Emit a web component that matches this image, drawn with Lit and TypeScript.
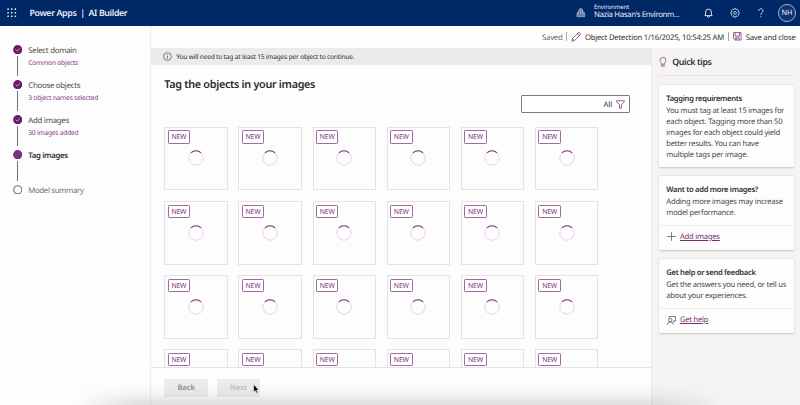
import { LitElement, html, css, svg, nothing } from "lit";
import { customElement } from "lit/decorators.js";
import { classMap } from "lit/directives/class-map.js";

interface Step {
  title: string;
  note?: string;
  state: "done" | "current" | "todo";
}

const STEPS: Step[] = [
  { title: "Select domain", note: "Common objects", state: "done" },
  { title: "Choose objects", note: "3 object names selected", state: "done" },
  { title: "Add images", note: "30 images added", state: "done" },
  { title: "Tag images", state: "current" },
  { title: "Model summary", state: "todo" },
];

const ICONS = {
  waffle: svg`<g fill="currentColor">${[1, 4.5, 8].map((y) =>
    [1, 4.5, 8].map((x) => svg`<rect x=${x - 0.7} y=${y - 0.7} width="1.5" height="1.5" rx=".3"/>`)
  )}</g>`,
};

@customElement("step-list")
class StepList extends LitElement {
  static styles = css`
    :host { display: block; padding: 19px 0 0 12.7px; }
    .step { display: flex; height: 35px; }
    .rail { width: 9.4px; display: flex; flex-direction: column; align-items: center; margin-right: 6.2px; flex: none; }
    .mark { display: block; width: 9.4px; height: 9.4px; flex: none; }
    .line { width: 1px; height: 19.6px; margin-top: 2.2px; background: #747270; }
    .title { font-size: 7.8px; line-height: 10px; margin-top: 1.8px; color: #4b4a49; letter-spacing: -0.25px; white-space: nowrap; }
    .current .title { font-weight: 600; color: #323130; letter-spacing: -0.33px; }
    .todo .title { color: #72706e; letter-spacing: -0.34px; }
    .note { font-size: 6.7px; line-height: 9px; margin-top: 1.6px; color: #8a3b87; letter-spacing: -0.24px; white-space: nowrap; }
  `;
  render() {
    return STEPS.map(
      (s, i) => html`<div class=${classMap({ step: true, [s.state]: true })}>
        <div class="rail">
          <svg class="mark" viewBox="0 0 10 10">
            ${s.state === "todo"
              ? svg`<circle cx="5" cy="5" r="4.3" fill="#fff" stroke="#72706e" stroke-width="1.1"/>`
              : svg`<circle cx="5" cy="5" r="4.9" fill=${s.state === "done" ? "#6b1c69" : "#7c3079"}/>`}
            ${s.state === "done"
              ? svg`<path d="M2.9 5.1 4.4 6.5 7.3 3.7" fill="none" stroke="#d9b9d8" stroke-width=".8"/>`
              : nothing}
          </svg>
          ${i < STEPS.length - 1 ? html`<div class="line"></div>` : nothing}
        </div>
        <div>
          <div class="title">${s.title}</div>
          ${s.note ? html`<div class="note">${s.note}</div>` : nothing}
        </div>
      </div>`
    );
  }
}

@customElement("image-tile")
class ImageTile extends LitElement {
  static styles = css`
    :host { display: block; position: relative; box-sizing: border-box; width: 63.4px; height: 63.4px; border: 1px solid #e4e2e3; background: #fdfdfd; }
    .tag { position: absolute; left: 2.4px; top: 2.4px; box-sizing: border-box; width: 22.4px; height: 13.4px; border: 1px solid #a069a0; border-radius: 1.2px; color: #7d387b; font-size: 6.9px; line-height: 13px; text-align: center; letter-spacing: -0.2px; background: #fff; }
    .spin { position: absolute; left: 22.6px; top: 22.4px; width: 16px; height: 16px; }
  `;
  render() {
    return html`<div class="tag">NEW</div>
      <svg class="spin" viewBox="0 0 16 16" fill="none">
        <circle cx="8" cy="8" r="7.2" stroke="#e9cfe6" stroke-width=".95"/>
        <path d="M2.9 2.9A7.2 7.2 0 0 1 13.1 2.9" stroke="#7c3a79" stroke-width="1.05"/>
      </svg>`;
  }
}

@customElement("app-root")
class AppRoot extends LitElement {
  static styles = css`
    :host { display: flex; flex-direction: column; position: relative; width: 800px; height: 405px; overflow: hidden; background: #fdfdfd; color: #323130; font-family: "Noto Sans", "Open Sans", sans-serif; font-size: 7.6px; text-rendering: geometricPrecision; }
    * { box-sizing: border-box; }
    svg { display: block; flex: none; }
    .bar { height: 25.5px; flex: none; background: #002766; color: #e9edf5; display: flex; align-items: center; padding: 0 4px 0 7.3px; }
    .brand { display: flex; font-size: 8.8px; font-weight: 600; margin-left: 12.8px; letter-spacing: -0.36px; white-space: pre; }
    .grow { flex: 1; }
    .env { width: 109.5px; margin-left: 8.5px; line-height: 9px; white-space: nowrap; }
    .env .small { font-size: 6px; line-height: 8px; margin-top: -2px; letter-spacing: -0.1px; }
    .env .name { font-size: 7.8px; letter-spacing: -0.35px; }
    .bell { margin-right: 17px; }
    .gear { margin-right: 18.5px; }
    .help { margin-right: 14px; }
    .avatar { width: 18px; height: 18px; border-radius: 50%; border: 1px solid #a5b4cf; background: #0e3370; font-size: 7.4px; line-height: 16px; text-align: center; }
    .body { flex: 1; display: flex; min-height: 0; }
    .nav { width: 151.3px; flex: none; border-right: 1px solid #edebec; }
    .right { flex: 1; display: flex; flex-direction: column; min-width: 0; }
    .cmd { height: 22px; flex: none; display: flex; align-items: center; justify-content: flex-end; padding-right: 4.4px; font-size: 7.7px; letter-spacing: -0.21px; white-space: nowrap; }
    .cmd span { padding-top: 2px; }
    .saved { color: #666; }
    .sep { width: 1px; height: 9px; background: #a9a7a5; margin: 0 4.2px 0 3.8px; }
    .object { margin-left: 3.4px; }
    .save { margin-left: 4px; }
    .split { flex: 1; display: flex; min-height: 0; }
    .main { width: 500px; flex: none; display: flex; flex-direction: column; }
    .info { height: 17.7px; flex: none; background: #edebe9; display: flex; align-items: center; padding-left: 11.4px; gap: 4.6px; font-size: 6.6px; letter-spacing: -0.19px; white-space: nowrap; color: #2b2a29; }
    .content { flex: 1; min-height: 0; overflow: hidden; padding: 0 0 0 13px; }
    .heading { margin: 12.1px 0 0; font-size: 10.8px; line-height: 15px; font-weight: 600; letter-spacing: -0.31px; color: #2b2a29; white-space: nowrap; }
    .filter { width: 109px; height: 17.6px; margin: 3.1px 0 0 356.7px; border: 1px solid #7e7c7b; border-radius: 1px; display: flex; align-items: center; justify-content: flex-end; padding-right: 3.5px; gap: 4.2px; font-size: 7.6px; background: #fff; }
    .filter span { padding-top: 1.2px; }
    .tiles { margin-top: 14px; display: grid; grid-template-columns: repeat(6, 63.4px); gap: 10.75px; }
    .foot { height: 38px; flex: none; border-top: 1px solid #e6e5e5; padding: 11.3px 0 0 13px; display: flex; gap: 8.6px; }
    .btn { width: 43.7px; height: 17.4px; background: #ededec; text-align: center; font-size: 7.6px; line-height: 18.4px; font-weight: 600; letter-spacing: -0.1px; color: #8f8e8d; }
    .next { color: #c3c2c1; }
    .tips { flex: 1; background: #f5f4f3; border-left: 1px solid #eceaea; padding: 6.5px 6.4px 0 7px; }
    .tips-title { display: flex; align-items: center; gap: 5px; height: 15px; font-size: 8.8px; font-weight: 600; letter-spacing: -0.36px; }
    .tips-title span { padding-top: .6px; }
    .rule { border-top: 1px solid #e8e6e5; margin: 6px 0 8.7px; }
    .card { background: #fdfdfd; border-radius: 1.6px; box-shadow: 0 .8px 2px rgba(0,0,0,.2); margin-bottom: 8.8px; padding: 8px 0 0 7px; white-space: nowrap; line-height: 10.95px; letter-spacing: -0.22px; color: #484644; }
    .card b { display: block; font-weight: 600; line-height: 12px; margin-bottom: 1.2px; color: #323130; letter-spacing: -0.3px; }
    .first { height: 82.4px; }
    .other { height: 74.4px; }
    .action { display: flex; align-items: center; height: 23px; margin: 5.9px 0 0 -7px; padding-left: 7.4px; gap: 4.2px; border-top: 1px solid #efedec; }
    .link { color: #74306f; text-decoration: underline; padding-top: 1.2px; }
    .shade { position: absolute; left: 75px; bottom: 0; width: 650px; height: 22px; background: linear-gradient(rgba(110,115,115,0), rgba(110,115,115,.06) 45%, rgba(110,115,115,.22)); mask-image: linear-gradient(90deg, transparent, #000 9%, #000 88%, transparent); pointer-events: none; }
    .cursor { position: absolute; left: 253px; top: 383.5px; }
  `;

  render() {
    return html`
      <div class="bar">
        <svg width="9.4" height="9.4" viewBox="0 0 9 9">${ICONS.waffle}</svg>
        <div class="brand"><span>Power Apps  |  AI Builder</span></div>
        <div class="grow"></div>
        <svg width="9.6" height="9.6" viewBox="0 0 10 10" fill="none" stroke="#dbe3f0" stroke-width=".7">
          <path d="M3 7.4V2.9Q3 .7 5 .6 7 .7 7 2.9v4.5M5 .6v6.8M3 3h4M3 5h4M3 3.6 1.3 4.8v2.6M7 3.6l1.7 1.2v2.6M1.3 6H3M7 6h1.7M.3 7.5h9.4M.6 9h8.8"/>
        </svg>
        <div class="env"><div class="small">Environment</div><div class="name">Nazia Hasan's Environm...</div></div>
        <svg class="bell" width="9" height="10" viewBox="0 0 9 10" fill="none" stroke="#e6ebf4" stroke-width=".9">
          <path d="M1.6 7.5V4a2.9 2.9 0 0 1 5.8 0v3.5M.5 7.6h8M3.3 8a1.2 1.2 0 0 0 2.4 0"/>
        </svg>
        <svg class="gear" width="10" height="10" viewBox="0 0 10 10" fill="none" stroke="#d5deed" stroke-width=".8">
          <path d="M4.2.6h1.6l.3 1.2 1.2-.7 1.2 1.2-.7 1.2 1.4.4v1.8l-1.4.4.7 1.2-1.2 1.2-1.2-.7-.3 1.4H4.2l-.3-1.4-1.2.7-1.2-1.2.7-1.2L.8 5.7V3.9l1.4-.4-.7-1.2 1.2-1.2 1.2.7z"/>
          <circle cx="5" cy="4.9" r="1.4"/>
        </svg>
        <svg class="help" width="6" height="10" viewBox="0 0 6 10" fill="none" stroke="#dbe3f0" stroke-width=".9">
          <path d="M.8 2.9a2.1 2.1 0 1 1 3.6 1.4C3.5 5.1 2.9 5.5 2.9 6.9M2.9 8.2v1.1"/>
        </svg>
        <div class="avatar">NH</div>
      </div>
      <div class="body">
        <step-list class="nav"></step-list>
        <div class="right">
          <div class="cmd">
            <span class="saved">Saved</span><span class="sep"></span>
            <svg width="10" height="10" viewBox="0 0 10 10" fill="none" stroke="#80417d" stroke-width=".8">
              <path d="M.8 9.2 1.5 6.5 7 1a1.3 1.3 0 0 1 2 2L3.5 8.5zM6.2 1.8l2 2M1.5 6.5l2 2"/>
            </svg>
            <span class="object">Object Detection 1/16/2025, 10:54:25 AM</span><span class="sep"></span>
            <svg width="8.6" height="8.6" viewBox="0 0 9 9" fill="none" stroke="#80417d" stroke-width=".85">
              <path d="M.6.6h7.8v7.8H1.8L.6 7.2zM2.2.8v3.4h4.6V.8M2.6 8.3V6h3.8v2.3M4 6.4v1.8"/>
            </svg>
            <span class="save">Save and close</span>
          </div>
          <div class="split">
            <div class="main">
              <div class="info">
                <svg width="9" height="9" viewBox="0 0 9 9" fill="none" stroke="#605e5c" stroke-width=".8">
                  <circle cx="4.5" cy="4.5" r="3.9"/><path d="M4.5 3.8v2.9M4.5 2.2v.9"/>
                </svg>
                <span class="info-text">You will need to tag at least 15 images per object to continue.</span>
              </div>
              <div class="content">
                <h1 class="heading">Tag the objects in your images</h1>
                <div class="filter">
                  <span>All</span>
                  <svg width="9" height="9" viewBox="0 0 9 9" fill="none" stroke="#80417d" stroke-width=".85">
                    <path d="M.6 .8h7.8v.8L5.4 4.8v3.4H3.6V4.8L.6 1.6z"/>
                  </svg>
                </div>
                <div class="tiles">${Array.from({ length: 24 }, () => html`<image-tile></image-tile>`)}</div>
              </div>
              <div class="foot"><div class="btn">Back</div><div class="btn next">Next</div></div>
            </div>
            <div class="tips">
              <div class="tips-title">
                <svg width="8" height="10" viewBox="0 0 8 10" fill="none" stroke="#8a4a89" stroke-width=".8">
                  <path d="M2.6 7.2C2.6 5.6.9 5.2.9 3.4a3 3 0 0 1 6 0c0 1.8-1.7 2.2-1.7 3.8zM2.6 7.2v2h2.6v-2"/>
                </svg>
                <span>Quick tips</span>
              </div>
              <div class="rule"></div>
              <div class="card first">
                <b>Tagging requirements</b>
                You must tag at least 15 images for<br>each object. Tagging more than 50<br>images for each object could yield<br>better results. You can have<br>multiple tags per image.
              </div>
              <div class="card other">
                <b>Want to add more images?</b>
                Adding more images may increase<br>model performance.
                <div class="action">
                  <svg width="9" height="9" viewBox="0 0 9 9" stroke="#605e5c" stroke-width=".8"><path d="M4.5 .2v8.6M.2 4.5h8.6"/></svg>
                  <span class="link">Add images</span>
                </div>
              </div>
              <div class="card other">
                <b>Get help or send feedback</b>
                Get the answers you need, or tell us<br>about your experiences.
                <div class="action">
                  <svg width="9" height="9" viewBox="0 0 9 9" fill="none" stroke="#4b4a49" stroke-width=".75">
                    <path d="M2.2 1.8V.6h6.4v4.2H7.4v1.3L6 4.8M.5 8.6a2.8 2.8 0 0 1 5.6 0"/><circle cx="3.3" cy="4" r="1.7"/>
                  </svg>
                  <span class="link">Get help</span>
                </div>
              </div>
            </div>
          </div>
        </div>
      </div>
      <div class="shade"></div>
      <svg class="cursor" width="7" height="10" viewBox="0 0 7 10"><path d="M.8.6v7.2l1.6-1.4 1.1 2.5 1.1-.5-1.1-2.4h2.1z" fill="#000" stroke="#fff" stroke-width=".35"/></svg>
    `;
  }
}
